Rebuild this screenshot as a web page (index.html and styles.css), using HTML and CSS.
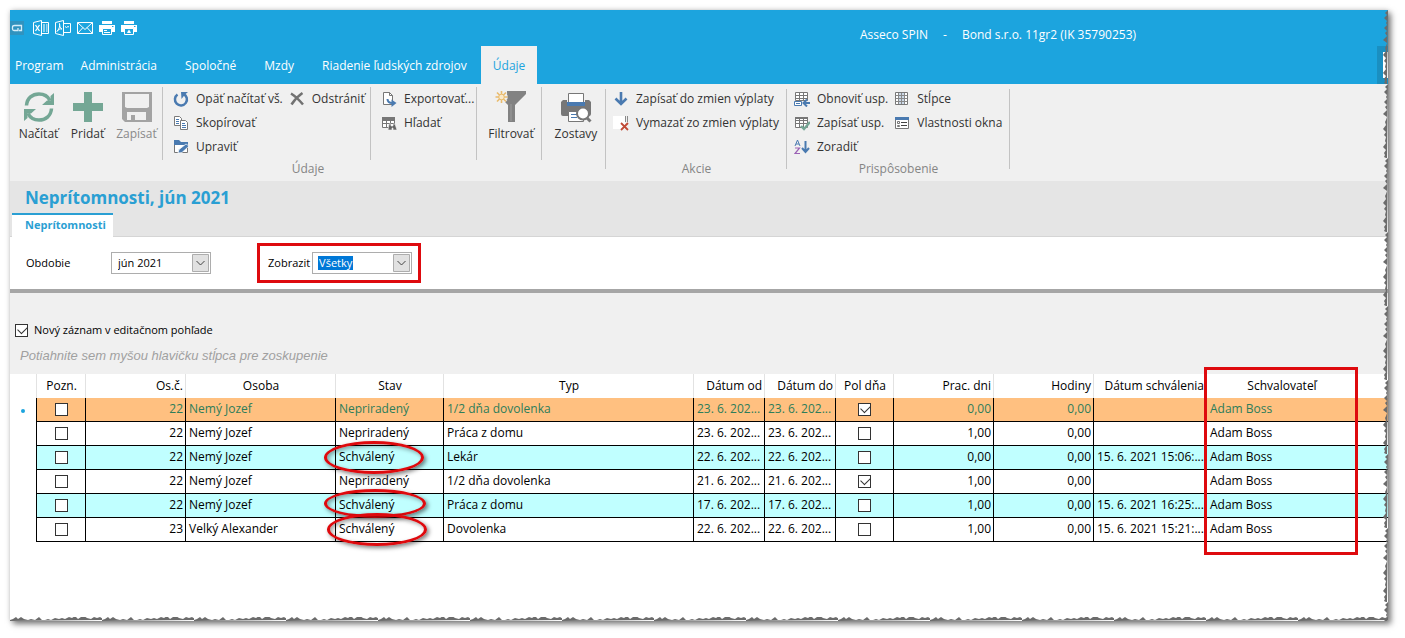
FILE: index.html
```html
<!DOCTYPE html>
<html lang="sk">
<head>
<meta charset="utf-8">
<title>Asseco SPIN</title>
<link rel="stylesheet" href="styles.css">
</head>
<body>
<main class="window">
  <header class="topbar">
    <div class="titlebar">
      <div class="quick">
        <svg class="logo" width="14" height="14" viewBox="0 0 14 14"><rect width="14" height="14" fill="#3093bf"/><path d="M9 9.500h2.500v-5h-7Q2.500 4.500 2.500 6v2q0 1.500 1.500 1.500h4V7" fill="none" stroke="#d5eefa" stroke-width="1.300"/></svg>
        <button class="qbtn" aria-label="Excel"><svg width="16" height="16" viewBox="0 0 16 16" fill="none" stroke="#fff"><path d="M.5 2.500l8-2v15l-8-2zM8.500 2.500h7v11h-7M10 5h2m1 0h1.500M10 7h2m1 0h1.500M10 9h2m1 0h1.500M10 11h2m1 0h1.500"/><path d="M2.500 5l4 6m0-6l-4 6" stroke-width="1.300"/></svg></button>
        <button class="qbtn" aria-label="PDF"><svg width="16" height="16" viewBox="0 0 16 16" fill="none" stroke="#fff"><path d="M.5 2.500l8-2v15l-8-2zM8.500 3.500h7v9h-7M10 6.500l1.500 1L13 6.500l1 .5"/><path d="M4.500 3.500c1 3-1 6-2.500 8 1-2 3-3 5-2.500-2-.5-2.500-3-2.500-5.500z"/></svg></button>
        <button class="qbtn" aria-label="E-mail"><svg width="16" height="16" viewBox="0 0 16 16" fill="none" stroke="#fff"><path d="M.5 2.500h15v11H.5zM.5 2.500L8 9.500l7.500-7M.5 13.500l5.500-6m9.500 6l-5.500-6"/></svg></button>
        <button class="qbtn" aria-label="Tlačiť"><svg width="16" height="16" viewBox="0 0 16 16"><path fill="#fff" d="M3 1h10v3H3zM0 5h16v7h-3V9H3v3H0z"/><path d="M3.500 8.500h9v6h-9z" fill="#1ca4de" stroke="#fff"/><path d="M5 10.500h3m-3 2h6" stroke="#fff"/><path d="M13 6.500h1.500" stroke="#1ca4de"/></svg></button>
        <button class="qbtn" aria-label="Náhľad tlače"><svg width="16" height="16" viewBox="0 0 16 16"><path fill="#fff" d="M3 1h10v3H3zM0 5h16v7h-3V9H3v3H0z"/><path d="M3.500 8.500h9v6h-9z" fill="#1ca4de" stroke="#fff"/><path d="M8 9.500l1 1.500 1 2H6l1-2z" fill="#fff"/><path d="M13 6.500h1.500" stroke="#1ca4de"/></svg></button>
      </div>
      <div class="apptitle"><span>Asseco SPIN</span><span>-</span><span>Bond s.r.o. 11gr2 (IK 35790253)</span></div>
    </div>
    <nav class="tabs">
      <button class="tab tab-first">Program</button>
      <button class="tab">Administrácia</button>
      <button class="tab">Spoločné</button>
      <button class="tab">Mzdy</button>
      <button class="tab">Riadenie ľudských zdrojov</button>
      <button class="tab active">Údaje</button>
      <span class="dock"></span>
    </nav>
  </header>

  <section class="ribbon">
    <div class="group">
      <div class="body">
        <div class="sub sub-main">
          <button class="large"><svg width="32" height="32" viewBox="0 0 32 32"><g fill="none" stroke="#74a795" stroke-width="3.500"><path d="M3.500 14.500C4 7 9.500 3 16 3c5 0 9 2.500 11 6.500"/><path d="M28.500 17.500C28 25 22.500 29 16 29c-5 0-9-2.500-11-6.500"/></g><path fill="#74a795" d="M31 2v12H19l5-4.500h3.500V5zM1 30V18h12l-5 4.500H4.500V27z"/></svg>Načítať</button>
          <button class="large"><svg width="32" height="32" viewBox="0 0 32 32"><path fill="#74a795" d="M12 1h8v11h11v8H20v11h-8V20H1v-8h11z"/></svg>Pridať</button>
          <button class="large dim"><svg width="32" height="32" viewBox="0 0 32 32"><path fill="#a3a3a3" fill-rule="evenodd" d="M1 1h30v30H4l-3-3zM4 3v13l2 1h20l2-1V3zM6 21v8h4v-5h4v5h11v-8z"/></svg>Zapísať</button>
        </div>
        <div class="sub sub-edit">
          <div class="col">
            <button class="small"><svg width="16" height="16" viewBox="0 0 16 16"><path d="M4.500 3.500a6 6 0 1 0 6-.5" fill="none" stroke="#4a7ab0" stroke-width="2.500"/><path fill="#4a7ab0" d="M8 1h7l-3 2.500L8.500 8z"/></svg>Opäť načítať vš.</button>
            <button class="small"><svg width="16" height="16" viewBox="0 0 16 16" fill="#fff" stroke="#7a7a7a"><path d="M1.500 1.500h5l2 2v7h-7z"/><path d="M3 4.500h3m-3 2h3m-3 2h3" stroke="#4a7ab0"/><path d="M7.500 5.500h5l2 2v7h-7z"/><path d="M9 8.500h3m-3 2h4m-4 2h4" stroke="#4a7ab0"/></svg>Skopírovať</button>
            <button class="small"><svg width="16" height="16" viewBox="0 0 16 16"><path d="M1.500 3.500h13v10h-13z" fill="#fff" stroke="#777"/><path fill="#4a7ab0" d="M1 1h5l2 2h7v3H1z"/><path d="M5 14l1-3.500L13 5l3 2-7 6.500z" fill="#4a7ab0" stroke="#fff" stroke-width=".7"/></svg>Upraviť</button>
          </div>
          <div class="col">
            <button class="small"><svg width="16" height="16" viewBox="0 0 16 16"><path d="M2 2.500c4 2.500 9 7.500 12 11M13.500 2C9 5 5 9.500 2.500 13.500" fill="none" stroke="#727272" stroke-width="2.500"/></svg>Odstrániť</button>
          </div>
        </div>
        <div class="sub sub-export">
          <div class="col">
            <button class="small"><svg width="16" height="16" viewBox="0 0 16 16"><path d="M2.500 1.500h6l3 3v9h-9z" fill="#fff" stroke="#777"/><path d="M8.500 1.500v3h3" fill="none" stroke="#777"/><path d="M6.500 8c0 3 2 4 5 4" fill="none" stroke="#4a7ab0" stroke-width="2"/><path d="M10.500 8.500l5 3.500-5 4z" fill="#4a7ab0"/></svg>Exportovať...</button>
            <button class="small"><svg width="16" height="16" viewBox="0 0 16 16"><path d="M1.500 2.500h12v10h-12zM1.500 5.500h12m-12 3h12M5.500 5v7m4-7v7" fill="#fff" stroke="#777"/><path d="M1 2h13v3H1z" fill="#777"/><path d="M7 15l1-6h2v2h2V9h2l2 6h-4v-2h-1v2z" fill="#666" stroke="#f0f0f0" stroke-width=".6"/></svg>Hľadať</button>
          </div>
        </div>
        <div class="sub sub-one">
          <button class="large"><svg width="32" height="32" viewBox="0 0 32 32"><path d="M12 0h19v3L20 14v17h-7V14l-5-5 4-3z" fill="#828282"/><path d="M16 13v17" stroke="#9c9c9c"/><path d="M6.500 0v12M.5 6h12M2 1.500l9 9m0-9l-9 9" stroke="#f0f0f0" stroke-width="4"/><path d="M6.500 0v12M.5 6h12M2 1.500l9 9m0-9l-9 9" stroke="#e9bb6d" stroke-width="1.600"/><circle cx="6.500" cy="6" r="2.800" fill="#fbe9c8" stroke="#e9bb6d"/></svg>Filtrovať</button>
        </div>
        <div class="sub sub-one sub-last">
          <button class="large"><svg width="32" height="32" viewBox="0 0 32 32"><path d="M8.500 2.500h15V12h-15z" fill="#fff" stroke="#777"/><path d="M3 9h4v3h18V9h4l2 2v12q0 2-2 2H3q-2 0-2-2V11z" fill="#777"/><path d="M7 11h18v4H7z" fill="#4a7ab0"/><path d="M8.500 20.500h15v10h-15z" fill="#fff" stroke="#777"/><path d="M11 23.500h6m-6 3h6" stroke="#4a7ab0"/><path d="M26 26l4.500 4.500" stroke="#777" stroke-width="3"/><circle cx="23" cy="22.500" r="6" fill="#fff" stroke="#777" stroke-width="2"/></svg>Zostavy</button>
        </div>
      </div>
      <div class="caption">Údaje</div>
    </div>
    <div class="group group-actions">
      <div class="body">
        <div class="col">
          <button class="small"><svg width="16" height="16" viewBox="0 0 16 16"><path d="M8 1v12M2.500 7.500L8 13l5.500-5.500" fill="none" stroke="#4a7ab0" stroke-width="2.600"/></svg>Zapísať do zmien výplaty</button>
          <button class="small"><svg width="16" height="16" viewBox="0 0 16 16"><path fill="#fff" d="M0 1h12v13H0z"/><path d="M12.500 1v6m2-6v6" stroke="#8a8a8a"/><path d="M8 8l7 7m0-7l-7 7" stroke="#c04a36" stroke-width="1.800"/></svg>Vymazať zo zmien výplaty</button>
        </div>
      </div>
      <div class="caption">Akcie</div>
    </div>
    <div class="group group-custom">
      <div class="body">
        <div class="col">
          <button class="small"><svg width="16" height="16" viewBox="0 0 16 16"><path d="M1.500 1.500h12v8h-12zM1.500 4.500h12m-12 3h12M5.500 2v7m4-7v7" fill="#fff" stroke="#777"/><path d="M.5 10.500h7v4h-7z" fill="#fff" stroke="#4a7ab0"/><path d="M2 12.500h4" stroke="#4a7ab0"/><path d="M16 12H10m3-3.500L9.500 12l3.500 3.500" fill="none" stroke="#4a7ab0" stroke-width="2"/></svg>Obnoviť usp.</button>
          <button class="small"><svg width="16" height="16" viewBox="0 0 16 16"><path d="M1.500 2.500h12v10h-12zM1.500 5.500h12m-12 3h12M5.500 3v9m4-9v9" fill="#fff" stroke="#777"/><path d="M1 2h13v2H1z" fill="#777"/><path d="M7 11l3 3 6-7" fill="none" stroke="#74a795" stroke-width="2.400"/></svg>Zapísať usp.</button>
          <button class="small"><svg width="16" height="16" viewBox="0 0 16 16" fill="none"><path d="M1 7l2.500-6L6 7M2 5h3" stroke="#4a7ab0"/><path d="M1 9h4.500L1 14.500h5" stroke="#9b62b5" stroke-width="1.200"/><path d="M11.500 2v11M8 9l3.500 4L15 9" stroke="#4a7ab0" stroke-width="2"/></svg>Zoradiť</button>
        </div>
        <div class="col">
          <button class="small"><svg width="16" height="16" viewBox="0 0 16 16"><path d="M1.500 1.500h12v12h-12z" fill="#fff" stroke="#777"/><path fill="#ccd9e8" d="M5 2h5v11H5z"/><path d="M1.500 4.500h12m-12 3h12m-12 3h12M4.500 2v11m3-11v11m3-11v11" stroke="#888"/></svg>Stĺpce</button>
          <button class="small"><svg width="16" height="16" viewBox="0 0 16 16"><path d="M1.500 2.500h13v11h-13z" fill="#fff" stroke="#777"/><path fill="#4a7ab0" d="M1 2h14v3H1z"/><path d="M3.500 6.500h2v2h-2zM3.500 10.500h2v1h-2z" fill="none" stroke="#777"/><path d="M7 7.500h6m-6 3h6" stroke="#444"/></svg>Vlastnosti okna</button>
        </div>
      </div>
      <div class="caption">Prispôsobenie</div>
    </div>
  </section>

  <section class="heading">
    <h1>Neprítomnosti, jún 2021</h1>
    <button class="viewtab">Neprítomnosti</button>
  </section>

  <form class="filters">
    <div class="field">
      <label class="lab-period" for="period">Obdobie</label>
      <span class="combo"><select id="period"><option>jún 2021</option></select><svg class="arrow" width="17" height="18" viewBox="0 0 17 18"><path d="M.5.5h16v17H.5z" fill="#e1e1e1" stroke="#adadad"/><path d="M4.500 7l4 4 4-4" fill="none" stroke="#444"/></svg></span>
    </div>
    <div class="field marked">
      <label for="show">Zobrazit</label>
      <span class="combo"><select id="show" class="picked"><option>Všetky</option></select><svg class="arrow" width="17" height="18" viewBox="0 0 17 18"><path d="M.5.5h16v17H.5z" fill="#e1e1e1" stroke="#adadad"/><path d="M4.500 7l4 4 4-4" fill="none" stroke="#444"/></svg></span>
    </div>
  </form>

  <section class="options">
    <label class="newrec"><input type="checkbox" checked>Nový záznam v editačnom pohľade</label>
    <p class="grouphint">Potiahnite sem myšou hlavičku stĺpca pre zoskupenie</p>
  </section>

  <table class="grid">
    <colgroup><col class="w26"><col class="w49"><col class="w100"><col class="w150"><col class="w108"><col class="w250"><col class="w71"><col class="w71"><col class="w58"><col class="w100"><col class="w100"><col class="w111"><col class="w153"><col></colgroup>
    <thead>
      <tr><th></th><th>Pozn.</th><th class="r">Os.č.</th><th>Osoba</th><th>Stav</th><th>Typ</th><th class="r">Dátum od</th><th class="r">Dátum do</th><th>Pol dňa</th><th class="r">Prac. dni</th><th class="r">Hodiny</th><th class="r flush">Dátum schválenia</th><th class="framed">Schvalovateľ<span class="frame"></span></th><th></th></tr>
    </thead>
    <tbody>
      <tr class="current"><td class="ind"><span class="dot"></span></td><td class="c"><input type="checkbox" aria-label="Pozn."></td><td class="r">22</td><td>Nemý Jozef</td><td>Nepriradený</td><td>1/2 dňa dovolenka</td><td>23. 6. 202...</td><td>23. 6. 202...</td><td class="c"><input type="checkbox" aria-label="Pol dňa" checked></td><td class="r">0,00</td><td class="r">0,00</td><td></td><td class="last">Adam Boss</td><td class="last"></td></tr>
      <tr><td class="ind"></td><td class="c"><input type="checkbox" aria-label="Pozn."></td><td class="r">22</td><td>Nemý Jozef</td><td>Nepriradený</td><td>Práca z domu</td><td>23. 6. 202...</td><td>23. 6. 202...</td><td class="c"><input type="checkbox" aria-label="Pol dňa"></td><td class="r">1,00</td><td class="r">0,00</td><td></td><td class="last">Adam Boss</td><td class="last"></td></tr>
      <tr class="approved"><td class="ind"></td><td class="c"><input type="checkbox" aria-label="Pozn."></td><td class="r">22</td><td>Nemý Jozef</td><td class="circled">Schválený<span class="ring"></span></td><td>Lekár</td><td>22. 6. 202...</td><td>22. 6. 202...</td><td class="c"><input type="checkbox" aria-label="Pol dňa"></td><td class="r">0,00</td><td class="r">0,00</td><td>15. 6. 2021 15:06:...</td><td class="last">Adam Boss</td><td class="last"></td></tr>
      <tr><td class="ind"></td><td class="c"><input type="checkbox" aria-label="Pozn."></td><td class="r">22</td><td>Nemý Jozef</td><td>Nepriradený</td><td>1/2 dňa dovolenka</td><td>21. 6. 202...</td><td>21. 6. 202...</td><td class="c"><input type="checkbox" aria-label="Pol dňa" checked></td><td class="r">1,00</td><td class="r">0,00</td><td></td><td class="last">Adam Boss</td><td class="last"></td></tr>
      <tr class="approved"><td class="ind"></td><td class="c"><input type="checkbox" aria-label="Pozn."></td><td class="r">22</td><td>Nemý Jozef</td><td class="circled">Schválený<span class="ring ring-flat"></span></td><td>Práca z domu</td><td>17. 6. 202...</td><td>17. 6. 202...</td><td class="c"><input type="checkbox" aria-label="Pol dňa"></td><td class="r">1,00</td><td class="r">0,00</td><td>15. 6. 2021 16:25:...</td><td class="last">Adam Boss</td><td class="last"></td></tr>
      <tr><td class="ind"></td><td class="c"><input type="checkbox" aria-label="Pozn."></td><td class="r">23</td><td>Velký Alexander</td><td class="circled">Schválený<span class="ring ring-low"></span></td><td>Dovolenka</td><td>22. 6. 202...</td><td>22. 6. 202...</td><td class="c"><input type="checkbox" aria-label="Pol dňa"></td><td class="r">1,00</td><td class="r">0,00</td><td>15. 6. 2021 15:21:...</td><td class="last">Adam Boss</td><td class="last"></td></tr>
    </tbody>
  </table>

  <svg class="tear tear-right" width="5" height="100%" aria-hidden="true"><defs><pattern id="tr" width="5" height="74" patternUnits="userSpaceOnUse"><path fill="#6b6b6b" d="M5 0L4 1 2 3l2 2-3 3 3 3-1 2 1 2-3 3 3 3-2 2 2 3-4 4 4 3-1 3-1 2 1 3-3 4 3 3-2 3 2 2-1 4 1 2-3 4 3 3-2 3 1 2-1 2 2 1h1z"/></pattern></defs><rect width="5" height="100%" fill="url(#tr)"/></svg>
  <svg class="tear tear-bottom" width="100%" height="4" aria-hidden="true"><defs><pattern id="tb" width="92" height="4" patternUnits="userSpaceOnUse"><path fill="#6b6b6b" d="M0 4V3l3-1 3-2 2 2 3-2 3 2 4 1 3-1 4 1 4-3 3 3 3 0 3-1 3 1 4-2 4 1 3-1 3 1 4-2 3 1 3-2 3 3 3-2 3-1 3 2 4 1 3-2 3 1 3-1 3 2v1z"/></pattern></defs><rect width="100%" height="4" fill="url(#tb)"/></svg>
</main>
</body>
</html>
```
FILE: styles.css
```css
* { box-sizing: border-box; }
body {
  margin: 0;
  padding: 10px 17px 18px 10px;
  background: #fff;
  color: #000;
  font: 12px/16px "Open Sans", "Noto Sans", sans-serif;
}
button {
  margin: 0;
  padding: 0;
  border: 0;
  background: none;
  color: inherit;
  font: inherit;
  white-space: nowrap;
}
svg { display: block; flex: none; }

.window {
  position: relative;
  display: flex;
  flex-direction: column;
  min-height: calc(100vh - 27px);
  background: #fff;
  box-shadow: 3px 3px 6px rgba(0, 0, 0, .5), 0 0 5px rgba(0, 0, 0, .15);
}

/* title bar and menu tabs */
.topbar { background: #1ca4de; color: #fff; }
.titlebar { display: flex; height: 36px; }
.quick { display: flex; align-items: center; width: 850px; gap: 6px; }
.logo { margin: 0 3px 0 0; }
.apptitle { display: flex; gap: 15px; padding-top: 17px; white-space: nowrap; }
.tabs { display: flex; height: 38px; }
.tab { padding: 2px 14px 0; }
.tab-first { padding: 2px 3px 0 5px; }
.tab.active { background: #f0f0f0; color: #1ca4de; padding: 2px 12px 0; }
.dock {
  width: 11px;
  margin-left: auto;
  background: linear-gradient(#fff, #fff) 6px 6px / 5px 26px no-repeat #1a8fc1;
}

/* ribbon */
.ribbon { display: flex; height: 97px; background: #f0f0f0; color: #333; }
.group { position: relative; display: flex; flex-direction: column; padding-top: 3px; }
.group::after {
  content: "";
  position: absolute;
  top: 5px;
  right: 0;
  width: 1px;
  height: 80px;
  background: #c3c3c3;
}
.group-actions { width: 181px; }
.group-custom { width: 223px; }
.body { display: flex; height: 73px; }
.caption { padding-top: 1px; color: #858585; text-align: center; }
.sub { display: flex; border-right: 1px solid #c3c3c3; }
.sub-main { width: 153px; padding-left: 4px; }
.sub-edit { width: 208px; }
.sub-export { width: 106px; }
.sub-one { width: 65px; padding-left: 4px; justify-content: center; }
.sub-last { width: 64px; border-right: 0; }
.col { display: flex; flex-direction: column; padding-left: 7px; }
.group-actions .col, .group-custom .col { padding-left: 4px; }
.sub .col + .col, .group .col + .col { padding-left: 3px; }
.large { display: flex; flex-direction: column; align-items: center; gap: 3px; width: 49px; padding-top: 4px; height: 56px; }
.large.dim { color: #8a8a8a; }
.small { display: flex; align-items: center; gap: 7px; height: 24px; padding-left: 3px; }

/* view heading */
.heading { height: 56px; padding: 6px 2px 0; background: #e5e5e5; border-bottom: 1px solid #d5d5d5; color: #2a9fd3; }
h1 { margin: 0 0 4px; padding-left: 13px; font-size: 17px; line-height: 22px; }
.viewtab { height: 24px; padding: 0 7px 2px 13px; border-top: 2px solid #2a9fd3; background: #fff; font-size: 11px; font-weight: 700; }

/* filters */
.filters { display: flex; align-items: center; gap: 46px; height: 56px; padding-left: 16px; border-bottom: 4px solid #a6a6a6; font-size: 11px; }
.field { display: flex; align-items: center; gap: 5px; }
.lab-period { width: 80px; }
.marked { gap: 2px; height: 40px; padding: 0 6px 0 8px; border: 3px solid #de0a0e; }
.combo { position: relative; width: 100px; height: 22px; }
select {
  width: 100%;
  height: 22px;
  padding: 0 6px;
  border: 1px solid #adadad;
  border-radius: 0;
  background: #fff;
  color: #000;
  font: inherit;
  appearance: none;
}
select.picked { background: linear-gradient(#0078d7, #0078d7) 5px 3px / 35px 14px no-repeat #fff; color: #fff; }
.arrow { position: absolute; top: 2px; right: 2px; pointer-events: none; }

/* options over the grid */
.options { height: 81px; padding: 29px 5px 0; background: #f0f0f0; font-size: 11px; }
.newrec { display: flex; align-items: center; gap: 6px; }
.grouphint { margin: 9px 0 0; padding-left: 5px; color: #a0a0a0; font: italic 13px/18px "Liberation Sans", sans-serif; }

input[type="checkbox"] {
  position: relative;
  display: block;
  width: 13px;
  height: 13px;
  margin: 0;
  border: 1px solid #333;
  background: #fff;
  appearance: none;
}
input:checked::after {
  content: "";
  position: absolute;
  top: 1px;
  left: 2px;
  width: 8px;
  height: 5px;
  border: solid #333;
  border-width: 0 0 1px 1px;
  transform: rotate(-45deg);
}

/* data grid */
.grid { width: 100%; table-layout: fixed; border-collapse: separate; border-spacing: 0; }
.w26 { width: 27px; } .w49 { width: 49px; } .w58 { width: 58px; } .w71 { width: 71px; }
.w100 { width: 100px; } .w108 { width: 108px; } .w111 { width: 111px; }
.w150 { width: 150px; } .w153 { width: 153px; } .w250 { width: 250px; }
th, td { height: 24px; padding: 0 2px 0 3px; white-space: nowrap; }
th { border-right: 1px solid #e2e2e2; font-weight: 400; text-align: center; }
th:last-child, th.framed { border-right: 0; }
td { padding-bottom: 2px; border-right: 1px solid #000; border-bottom: 1px solid #000; }
td:nth-child(13) { padding-left: 5px; }
.r { text-align: right; }
.flush { padding-right: 0; }
td.c { padding: 0; }
.c input { margin: 0 auto; }
.ind { border-bottom: 0; background: #fff; }
.last { border-right: 0; }
.dot { display: block; width: 4px; height: 4px; margin: 3px 0 0 8px; border-radius: 2px; background: #1ca4de; }
.current td:not(.ind) { background: #ffc080; color: #2d7d5a; }
.approved td:not(.ind) { background: #c0ffff; }

/* red callouts */
.framed, .circled { position: relative; }
.frame { position: absolute; z-index: 2; top: -7px; left: -1px; width: 154px; height: 188px; border: 3px solid #de0a0e; }
.ring {
  position: absolute;
  z-index: 2;
  top: -5px;
  left: -12px;
  width: 100px;
  height: 33px;
  border: 3px solid #de0a0e;
  border-radius: 50%;
  box-shadow: 2px 2px 4px rgba(0, 0, 0, .5), inset 2px 2px 4px rgba(0, 0, 0, .35);
}
.ring-flat { height: 29px; width: 102px; }
.ring-low { left: -9px; }

/* torn paper edge */
.tear { position: absolute; }
.tear-right { top: 0; right: 0; }
.tear-bottom { left: 0; bottom: 0; }
```
